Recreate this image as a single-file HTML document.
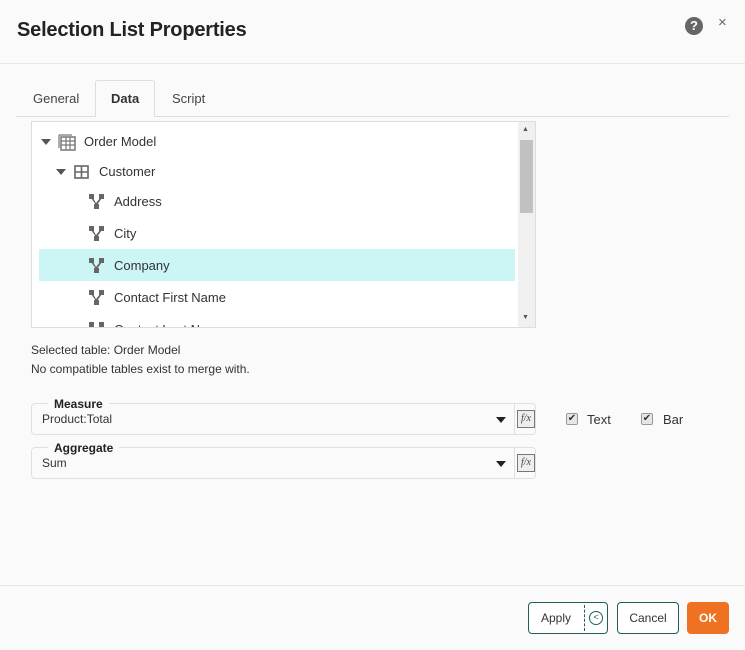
<!DOCTYPE html>
<html><head><style>
*{box-sizing:border-box}
body{margin:0;width:745px;height:650px;background:#fafafa;font-family:"Liberation Sans",sans-serif;color:#222;position:relative;overflow:hidden;font-size:13px}
.abs{position:absolute}
.title{left:17px;top:19px;font-size:20px;font-weight:bold;color:#222;letter-spacing:-0.2px}
.row{position:absolute;height:32px;line-height:32px;font-size:13px;color:#333}
.fld{position:absolute;left:31px;width:505px;height:32px;border:1px solid #e0e0e0;border-radius:4px;background:#fafafa}
.leg{position:absolute;top:-7px;left:16px;padding:0 6px;background:#fafafa;font-weight:bold;font-size:12px;line-height:14px}
.val{position:absolute;left:10px;top:8px;font-size:12px;color:#333}
.fx{position:absolute;right:0;top:0;width:21px;height:30px;border-left:1px solid #e0e0e0}
.fx div{position:absolute;left:2px;top:6px;width:18px;height:18px;border:1px solid #777;background:#eee;font-size:10px;font-style:italic;font-family:"Liberation Serif",serif;line-height:16px;text-align:center;color:#444}
.cb{position:absolute;width:12px;height:12px;border:1px solid #999;border-radius:2px;background:#e6e6e6;font-size:10px;line-height:10px;text-align:center;color:#333}
.btn{position:absolute;top:602px;height:32px;border:1px solid #1f5f5b;border-radius:4px;background:#fff;font-size:12px;line-height:30px;text-align:center;color:#333}
.tri{position:absolute;width:0;height:0;border-left:5px solid transparent;border-right:5px solid transparent;border-top:6px solid #555}
</style></head><body>
<div class="abs title">Selection List Properties</div>
<div class="abs" style="left:685px;top:17px;width:18px;height:18px;border-radius:50%;background:#666;color:#fff;font-weight:bold;font-size:13px;line-height:18px;text-align:center">?</div>
<div class="abs" style="left:718px;top:14px;font-size:15px;color:#666">×</div>
<div class="abs" style="left:0;top:63px;width:745px;height:1px;background:#e8e8e8"></div>

<div class="abs" style="left:16px;top:116px;width:713px;height:1px;background:#ddd"></div>
<div class="abs" style="left:95px;top:80px;width:60px;height:37px;border:1px solid #ddd;border-bottom:none;border-radius:3px 3px 0 0;background:#fafafa"></div>
<div class="abs" style="left:33px;top:91px;font-size:13px;color:#444">General</div>
<div class="abs" style="left:111px;top:91px;font-size:13px;font-weight:bold;color:#333">Data</div>
<div class="abs" style="left:172px;top:91px;font-size:13px;color:#444">Script</div>

<div class="abs" style="left:31px;top:121px;width:505px;height:207px;border:1px solid #ddd;background:#fff;overflow:hidden">
 <div class="abs" style="left:486px;top:0;width:18px;height:206px;background:#f0f0f0"></div>
 <div class="abs" style="left:488px;top:18px;width:13px;height:73px;background:#c1c1c1"></div>
 <div class="abs" style="left:490px;top:4px;font-size:7px;color:#555">▲</div>
 <div class="abs" style="left:490px;top:192px;font-size:7px;color:#555">▼</div>
 <div class="abs" style="left:7px;top:127px;width:476px;height:32px;background:#ccf5f5"></div>
 <div class="tri" style="left:9px;top:17px"></div>
 <svg class="abs" style="left:26px;top:12px" width="18" height="17"><rect x="3" y="3" width="14" height="13" fill="none" stroke="#777" stroke-width="1.5"/><path d="M1 1h13M1 1v13M3 7h14M3 11h14M8 3v13M12 3v13" stroke="#777" stroke-width="1.2" fill="none"/></svg>
 <div class="row" style="left:52px;top:4px">Order Model</div>
 <div class="tri" style="left:24px;top:47px"></div>
 <svg class="abs" style="left:42px;top:43px" width="15" height="14"><rect x="1" y="1" width="13" height="12" fill="none" stroke="#666" stroke-width="1.6"/><path d="M1 7h13M7.5 1v12" stroke="#666" stroke-width="1.6"/></svg>
 <div class="row" style="left:67px;top:34px">Customer</div>
 <svg class="abs" style="left:57px;top:72px" width="15" height="16"><g fill="#666"><rect x="0" y="0" width="5" height="5"/><rect x="10" y="0" width="5" height="5"/><rect x="5" y="10" width="5" height="5"/><path d="M2 4l5 7 1 0 5-7-2 0-4 5-3-5z"/></g></svg>
 <div class="row" style="left:82px;top:64px">Address</div>
 <svg class="abs" style="left:57px;top:104px" width="15" height="16"><g fill="#666"><rect x="0" y="0" width="5" height="5"/><rect x="10" y="0" width="5" height="5"/><rect x="5" y="10" width="5" height="5"/><path d="M2 4l5 7 1 0 5-7-2 0-4 5-3-5z"/></g></svg>
 <div class="row" style="left:82px;top:96px">City</div>
 <svg class="abs" style="left:57px;top:136px" width="15" height="16"><g fill="#666"><rect x="0" y="0" width="5" height="5"/><rect x="10" y="0" width="5" height="5"/><rect x="5" y="10" width="5" height="5"/><path d="M2 4l5 7 1 0 5-7-2 0-4 5-3-5z"/></g></svg>
 <div class="row" style="left:82px;top:128px">Company</div>
 <svg class="abs" style="left:57px;top:168px" width="15" height="16"><g fill="#666"><rect x="0" y="0" width="5" height="5"/><rect x="10" y="0" width="5" height="5"/><rect x="5" y="10" width="5" height="5"/><path d="M2 4l5 7 1 0 5-7-2 0-4 5-3-5z"/></g></svg>
 <div class="row" style="left:82px;top:160px">Contact First Name</div>
 <svg class="abs" style="left:57px;top:200px" width="15" height="16"><g fill="#666"><rect x="0" y="0" width="5" height="5"/><rect x="10" y="0" width="5" height="5"/><rect x="5" y="10" width="5" height="5"/><path d="M2 4l5 7 1 0 5-7-2 0-4 5-3-5z"/></g></svg>
 <div class="row" style="left:82px;top:192px">Contact Last Name</div>
</div>

<div class="abs" style="left:31px;top:343px;font-size:12px;color:#333">Selected table: Order Model</div>
<div class="abs" style="left:31px;top:362px;font-size:12px;color:#333">No compatible tables exist to merge with.</div>

<div class="fld" style="top:403px"><div class="leg">Measure</div><div class="val">Product:Total</div>
 <div class="tri" style="left:464px;top:13px;border-top-color:#222"></div><div class="fx"><div>f/x</div></div></div>
<div class="fld" style="top:447px"><div class="leg">Aggregate</div><div class="val">Sum</div>
 <div class="tri" style="left:464px;top:13px;border-top-color:#222"></div><div class="fx"><div>f/x</div></div></div>

<div class="cb" style="left:566px;top:413px">✔</div>
<div class="abs" style="left:587px;top:412px;font-size:13px;color:#333">Text</div>
<div class="cb" style="left:641px;top:413px">✔</div>
<div class="abs" style="left:663px;top:412px;font-size:13px;color:#333">Bar</div>

<div class="abs" style="left:0;top:585px;width:745px;height:1px;background:#e8e8e8"></div>
<div class="btn" style="left:528px;width:80px;text-align:left;padding-left:12px">Apply
 <div class="abs" style="left:55px;top:2px;height:26px;border-left:1px dashed #1f5f5b"></div>
 <div class="abs" style="left:60px;top:8px;width:14px;height:14px;border:1.5px solid #1f5f5b;border-radius:50%;font-size:9px;line-height:11px;text-align:center;color:#1f5f5b">&lt;</div>
</div>
<div class="btn" style="left:617px;width:62px">Cancel</div>
<div class="btn" style="left:687px;width:42px;background:#ef7122;border-color:#ef7122;color:#fff;font-weight:bold">OK</div>
</body></html>
